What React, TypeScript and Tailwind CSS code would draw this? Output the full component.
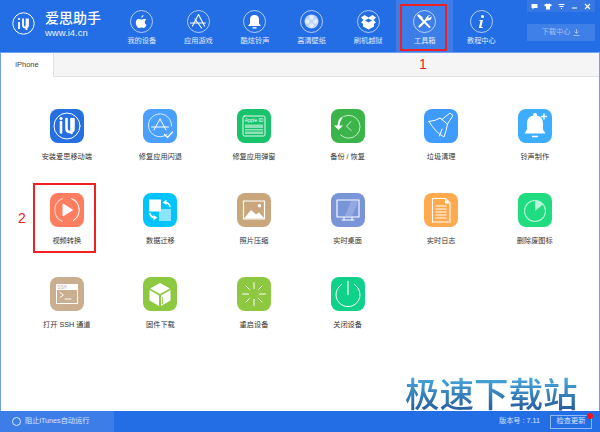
import type { ReactNode } from 'react'

const s = { fill: 'none', stroke: '#fff', strokeLinecap: 'round', strokeLinejoin: 'round' } as const

const tools: { label: string; bg: string; icon: ReactNode }[] = [
  {
    label: '安装爱思移动端',
    bg: 'bg-[#256fe2]',
    icon: (
      <>
        <circle cx="17" cy="17" r="13" {...s} strokeWidth="1" />
        <path d="M11 13v10.500M16.500 10v9.500q0 3.500 3.500 3.500t3.500-3.500V10M21.500 10v14" {...s} strokeWidth="2.600" />
        <circle cx="11" cy="9.500" r="1.600" fill="#fff" />
      </>
    ),
  },
  {
    label: '修复应用闪退',
    bg: 'bg-[#4a9fff]',
    icon: (
      <>
        <path d="M24 25.500A11.500 11.500 0 1 1 28.500 17" {...s} strokeWidth="0.800" />
        <path d="M17 10 11 21M17 10l6 11M8.500 18h17" {...s} strokeWidth="1" />
        <path d="m21.500 25.500 3 3 5-5.500" {...s} strokeWidth="1.200" />
      </>
    ),
  },
  {
    label: '修复应用弹窗',
    bg: 'bg-[#19c36c]',
    icon: (
      <>
        <rect x="6" y="7" width="22" height="20" rx="1.500" {...s} strokeWidth="0.900" />
        <text x="17" y="13" textAnchor="middle" fontSize="4.800" fontFamily="Liberation Sans, sans-serif" fill="#fff">Apple ID</text>
        <rect x="8" y="15.500" width="18" height="3.500" fill="#fff" fillOpacity="0.500" />
        <rect x="8" y="20" width="18" height="1.500" fill="#fff" fillOpacity="0.500" />
        <rect x="8" y="22.500" width="18" height="2.500" fill="#fff" fillOpacity="0.500" />
      </>
    ),
  },
  {
    label: '备份 / 恢复',
    bg: 'bg-[#3bb54a]',
    icon: (
      <>
        <path d="M9 10A11.500 11.500 0 1 1 9.500 26" {...s} stroke="#d6f2d9" strokeWidth="0.900" />
        <path d="M20 12.500 15.500 17l4.500 4.500" {...s} stroke="#d6f2d9" strokeWidth="1" />
        <path d="M10 9.500q-2.500 3-2.500 7" {...s} strokeWidth="2" />
        <path d="m3 16.500 4.500 4.500 4.500-4.500z" fill="#fff" />
      </>
    ),
  },
  {
    label: '垃圾清理',
    bg: 'bg-[#409bff]',
    icon: (
      <>
        <path d="M5 12.500q6.500-.500 11-3.500l7.500 6q-1 6-3.500 13-8-4-15-15.500Z" {...s} strokeWidth="1" />
        <path d="m18 10.500 8-6.500 3 2.500-5.500 8.500" {...s} strokeWidth="1" />
        <path d="m15.500 27 2.500-7" {...s} strokeWidth="1" />
      </>
    ),
  },
  {
    label: '铃声制作',
    bg: 'bg-[#3daeff]',
    icon: (
      <>
        <path d="M17 6.500q-8 0-8 8v6l-2.500 4h21l-2.500-4v-6q0-8-8-8Z" fill="#fff" />
        <circle cx="17" cy="6" r="2" fill="#fff" />
        <path d="M14.500 27.500h5" {...s} strokeWidth="1.400" />
        <path d="M26 5v5M23.500 7.500h5" {...s} strokeWidth="1.400" />
      </>
    ),
  },
  {
    label: '视频转换',
    bg: 'bg-[#ff7e60]',
    icon: (
      <>
        <path d="M21.500 5.500a12.500 12.500 0 0 1 2 22" {...s} strokeWidth="1.100" />
        <path d="M12.500 28.500a12.500 12.500 0 0 1-2-22l2-1" {...s} strokeOpacity="0.650" strokeWidth="1.100" />
        <path d="M13 11v12l9.500-6Z" fill="#fff" stroke="#fff" strokeLinejoin="round" />
      </>
    ),
  },
  {
    label: '数据迁移',
    bg: 'bg-[#00c3ff]',
    icon: (
      <>
        <rect x="6" y="6.500" width="12" height="12" fill="#fff" />
        <rect x="16" y="16" width="12" height="12" fill="#fff" fillOpacity="0.550" />
        <path d="M21 9.500q5-.500 6 4" {...s} strokeWidth="1.600" />
        <path d="m23.500 6.500-3.500 3 3.500 2.500z" fill="#fff" />
        <path d="M13 24.500q-5 .500-6-4" {...s} strokeWidth="1.600" />
        <path d="m10.500 27.500 3.500-3-3.500-2.500z" fill="#fff" />
      </>
    ),
  },
  {
    label: '照片压缩',
    bg: 'bg-[#c9a67b]',
    icon: (
      <>
        <rect x="6.500" y="8" width="21" height="18" {...s} strokeWidth="1.200" />
        <path d="M7 25.500 14 17l5 4.500 3-2 5.500 6Z" fill="#fff" />
        <circle cx="22.500" cy="12.800" r="1.800" fill="#fff" />
      </>
    ),
  },
  {
    label: '实时桌面',
    bg: 'bg-[#7a94d8]',
    icon: (
      <>
        <rect x="6" y="7" width="22" height="17" {...s} strokeWidth="1.100" />
        <path d="M20 8 14 23h7l5-11V8Z" fill="#fff" fillOpacity="0.200" />
        <path d="M11 27h12M13 24.500v2.500M21 24.500v2.500" {...s} strokeWidth="1" />
      </>
    ),
  },
  {
    label: '实时日志',
    bg: 'bg-[#ffaa4f]',
    icon: (
      <>
        <path d="M8.500 5.500h13l4.500 4.500v19h-17.500Z" {...s} strokeWidth="1.100" />
        <path d="M21 6v4.500h4.500Z" fill="#fff" />
        <path d="M11.500 13h11M11.500 16h11M11.500 19h11M11.500 22h11M11.500 25h11" {...s} strokeWidth="1" strokeLinecap="butt" />
      </>
    ),
  },
  {
    label: '删除废图标',
    bg: 'bg-[#20dc80]',
    icon: (
      <>
        <circle cx="17" cy="18" r="10.500" {...s} stroke="#b9f5d6" strokeWidth="1.100" />
        <path d="M17 18V7.500A10.500 10.500 0 0 1 25 11.500Z" fill="#b9f5d6" />
      </>
    ),
  },
  {
    label: '打开 SSH 通道',
    bg: 'bg-[#c9ae90]',
    icon: (
      <>
        <rect x="6" y="7" width="22" height="20" fill="#fff" />
        <rect x="7" y="13" width="20" height="13" fill="#c9ae90" />
        <text x="7.500" y="11.800" fontSize="4.500" fontFamily="Liberation Sans, sans-serif" fill="#c9ae90">SSH</text>
        <path d="m10 15.500 3.500 2.500-3.500 2.500M15 22h6" {...s} strokeWidth="1" />
      </>
    ),
  },
  {
    label: '固件下载',
    bg: 'bg-[#8cc840]',
    icon: (
      <>
        <path d="M17 6 27 11.500 17 17 7 11.500Z" fill="#fff" />
        <path d="M6.500 13 16 18.500V29L6.500 23.500Z" fill="#fff" />
        <path d="M27.500 13v10.500L18 29V18.500Z" fill="#fff" />
        <path d="M19.500 20v7" stroke="#8cc840" strokeWidth="0.800" />
      </>
    ),
  },
  {
    label: '重启设备',
    bg: 'bg-[#8cc840]',
    icon: (
      <path
        d="M17 5.500v6M17 22.500v6M5.500 17h6M22.500 17h6M9 9l3.500 3.500M21.500 21.500 25 25M9 25l3.500-3.500M21.500 12.500 25 9"
        {...s}
        strokeWidth="1"
      />
    ),
  },
  {
    label: '关闭设备',
    bg: 'bg-[#0fd18a]',
    icon: (
      <>
        <path d="M10.500 7.500a12 12 0 1 0 13 0" {...s} strokeWidth="1" />
        <path d="M17 4.500v13" {...s} stroke="#b6f0da" strokeWidth="1.600" />
      </>
    ),
  },
]

const nav: { label: string; icon: ReactNode; active?: boolean }[] = [
  {
    label: '我的设备',
    icon: (
      <>
        <path d="M14.300 8.700c-1.200 0-2 .8-2.800.8s-1.500-.8-2.600-.8c-1.700 0-3.100 1.500-3.100 3.800 0 2.600 1.800 5.600 3.200 5.600.8 0 1.200-.6 2.400-.6s1.500.6 2.400.6c1.100 0 2.100-1.700 2.700-3.300-2.200-1-2.300-4-.2-5-.5-.7-1.200-1.100-2-1.100Z" fill="#fff" />
        <path d="M13.500 5c0 1.300-1 2.600-2.200 2.700 0-1.300.9-2.500 2.200-2.700Z" fill="#fff" />
      </>
    ),
  },
  {
    label: '应用游戏',
    icon: <path d="M11.500 4.500 5.500 16M11.500 4.500l6 11.500M3.500 13h15M8 9l6.500 9" {...s} strokeWidth="1.100" />,
  },
  {
    label: '酷炫铃声',
    icon: (
      <>
        <path d="M11.500 5q-4.500 0-4.500 4.500v4L5 16h13l-2-2.500v-4Q16 5 11.500 5Z" fill="#fff" />
        <path d="M9.500 17.200h4v1.300h-4z" fill="#fff" />
      </>
    ),
  },
  {
    label: '高清壁纸',
    icon: (
      <>
        <circle cx="11.500" cy="11.500" r="7" fill="#fff" fillOpacity="0.700" />
        <circle cx="11.500" cy="7.500" r="2.200" fill="#fff" fillOpacity="0.600" />
        <circle cx="11.500" cy="15.500" r="2.200" fill="#fff" fillOpacity="0.600" />
        <circle cx="7.500" cy="11.500" r="2.200" fill="#fff" fillOpacity="0.600" />
        <circle cx="15.500" cy="11.500" r="2.200" fill="#fff" fillOpacity="0.600" />
      </>
    ),
  },
  {
    label: '刷机越狱',
    icon: (
      <path
        d="m7.500 5 4 2.500 4-2.500 3.500 2.500-2.500 2.500 2.500 2.500-2 1.300v2.700l-5.500 3-5.500-3v-2.700l-2-1.300 2.500-2.500L4 7.500Zm4 3.500L8 10.500l3.500 2 3.500-2Z"
        fill="#fff"
        fillRule="evenodd"
      />
    ),
  },
  {
    label: '工具箱',
    active: true,
    icon: (
      <>
        <path d="M7 7.500 16.500 17" {...s} strokeWidth="2" />
        <path d="M5.500 5.500 8.500 8" {...s} strokeWidth="2.400" />
        <path d="m6.500 16.500 7.500-7.500" {...s} strokeWidth="2.200" />
        <path d="M17.800 5.600a3.300 3.300 0 0 0-4.600 3.600l1.300 1.300a3.300 3.300 0 0 0 3.900-4.300l-2 1.800-1.100-.4-.2-1Z" fill="#fff" />
      </>
    ),
  },
  {
    label: '教程中心',
    icon: (
      <>
        <circle cx="12.500" cy="6.500" r="1.500" fill="#fff" />
        <path d="M9.500 10h3.500l-1.700 7h1.500v1H8.800l1.700-7H9.300Z" fill="#fff" />
      </>
    ),
  },
]

function NavItem({ label, icon, active }: { label: string; icon: ReactNode; active?: boolean }) {
  return (
    <div className={`w-[56.600px] h-full flex flex-col items-center pt-[10px] ${active ? 'bg-[#3c7de8]' : ''}`}>
      <svg width="23" height="23" viewBox="0 0 23 23">
        <circle cx="11.500" cy="11.500" r="11" fill="none" stroke="#fff" strokeOpacity="0.800" strokeWidth="0.800" />
        {icon}
      </svg>
      <span className="mt-[3px] text-[7.200px] leading-[10px] text-white/85">{label}</span>
    </div>
  )
}

export default function App() {
  return (
    <div
      className="relative w-[600px] h-[432px] overflow-hidden bg-white flex flex-col"
      style={{ fontFamily: '"Liberation Sans", "Noto Sans CJK SC", sans-serif' }}
    >
      <header className="h-[52px] shrink-0 bg-[#246ee5] flex text-white">
        <div className="w-[113.500px] shrink-0 flex items-center pl-[12px] pb-[5px]">
          <svg width="23" height="23" viewBox="0 0 23 23">
            <circle cx="11.500" cy="11.500" r="10.700" fill="none" stroke="#fff" strokeWidth="1" />
            <path d="M7 10v7M11 6.500V13q0 2.500 2.500 2.500T16 13V6.500M14.500 6.500V18" fill="none" stroke="#fff" strokeWidth="1.800" />
            <circle cx="7" cy="7" r="1.100" fill="#fff" />
          </svg>
          <div className="ml-[10px] flex flex-col">
            <span className="text-[14px] leading-[17px] font-medium">爱思助手</span>
            <span className="text-[9.500px] leading-[11px] text-white/90">www.i4.cn</span>
          </div>
        </div>
        <nav className="flex h-full">
          {nav.map((n) => (
            <NavItem key={n.label} {...n} />
          ))}
        </nav>
        <div className="ml-auto w-[73px] pr-[5px] flex flex-col items-end">
          <div className="w-[68px] h-[12px] bg-[#3777e4] flex items-center justify-around px-[1px] text-[8px] leading-none">
            <svg width="7" height="7" viewBox="0 0 7 7"><path d="M.5 1h6v4H3L1.500 6.500V5h-1z" fill="#fff" /></svg>
            <svg width="8" height="7" viewBox="0 0 8 7"><path d="M2.500.5 4 1l1.500-.5L8 2 6.800 3.500 6 3v3.500H2V3l-.8.5L0 2Z" fill="#fff" /></svg>
            <svg width="7" height="7" viewBox="0 0 7 7"><path d="M.5 1.500h6M1.500 3.500h4M3 5.500h1" stroke="#fff" strokeWidth="1" /></svg>
            <svg width="7" height="7" viewBox="0 0 7 7"><path d="M1 5h5" stroke="#fff" strokeWidth="1" /></svg>
            <svg width="7" height="7" viewBox="0 0 7 7"><path d="m1 1 5 5M6 1 1 6" stroke="#fff" strokeWidth="1.100" /></svg>
          </div>
          <div className="mt-[12px] w-[68px] h-[17px] bg-[#3f7fe8] flex items-center justify-center gap-[3px] text-[7.200px] text-white/50">
            下载中心
            <svg width="7" height="7" viewBox="0 0 7 7"><path d="M3.500 0v4M1.500 2.500l2 2 2-2M.5 6.500h6" fill="none" stroke="#fff" strokeOpacity="0.500" /></svg>
          </div>
        </div>
      </header>

      <main className="flex-1 flex flex-col border-x border-[#6f9ff0] border-t border-t-[#6f9ff0]">
        <div className="h-[24px] shrink-0 bg-[#f5f5f5] border-b border-[#e2e2e2] flex">
          <div className="w-[53px] h-[24px] bg-white border-r border-[#e2e2e2] flex items-center justify-center text-[7.500px] text-[#444]">
            iPhone
          </div>
        </div>
        <div className="pl-[19px] pt-[32px] w-[581px] grid grid-cols-[repeat(6,93.600px)] auto-rows-[84px]">
          {tools.map((t) => (
            <div key={t.label} className="flex flex-col items-center">
              <div className={`w-[34px] h-[34px] rounded-[8px] ${t.bg}`}>
                <svg width="34" height="34" viewBox="0 0 34 34">
                  {t.icon}
                </svg>
              </div>
              <span className="mt-[9px] text-[7.200px] leading-[10px] text-[#333] whitespace-nowrap">{t.label}</span>
            </div>
          ))}
        </div>
      </main>

      <footer className="h-[21px] shrink-0 bg-[#246ee5] flex items-center text-white">
        <div className="w-[114px] h-full bg-[#3c7de8] flex items-center pl-[12px] gap-[4px] text-[7.200px] text-white/80">
          <span className="w-[9px] h-[9px] rounded-full border border-white/80" />
          阻止iTunes自动运行
        </div>
        <span className="ml-auto text-[7.200px] text-white/80">版本号 : 7.11</span>
        <div className="relative ml-[10px] mr-[8px] w-[42px] h-[14px] border border-white/50 flex items-center justify-center text-[7.200px] text-white/80">
          检查更新
          <span className="absolute -top-[3px] -right-[2px] w-[6px] h-[6px] rounded-full bg-[#f01414]" />
        </div>
      </footer>

      {/* red annotations over the screenshot */}
      <div className="absolute left-[400px] top-[4px] w-[47px] h-[47px] border-2 border-[#f02020]" />
      <span className="absolute left-[419px] top-[56px] text-[14px] leading-[16px] text-[#f02020]">1</span>
      <div className="absolute left-[33px] top-[183px] w-[63px] h-[70px] border-2 border-[#f02020]" />
      <span className="absolute left-[18px] top-[210px] text-[14px] leading-[16px] text-[#f02020]">2</span>

      {/* site watermark */}
      <span
        className="absolute left-[405px] top-[372px] text-[34.500px] leading-[40px] font-medium whitespace-nowrap bg-gradient-to-b from-[#4fb4e4] to-[#275a9c] bg-clip-text text-transparent"
        style={{ fontFamily: '"Noto Sans CJK SC", sans-serif' }}
      >
        极速下载站
      </span>
    </div>
  )
}
